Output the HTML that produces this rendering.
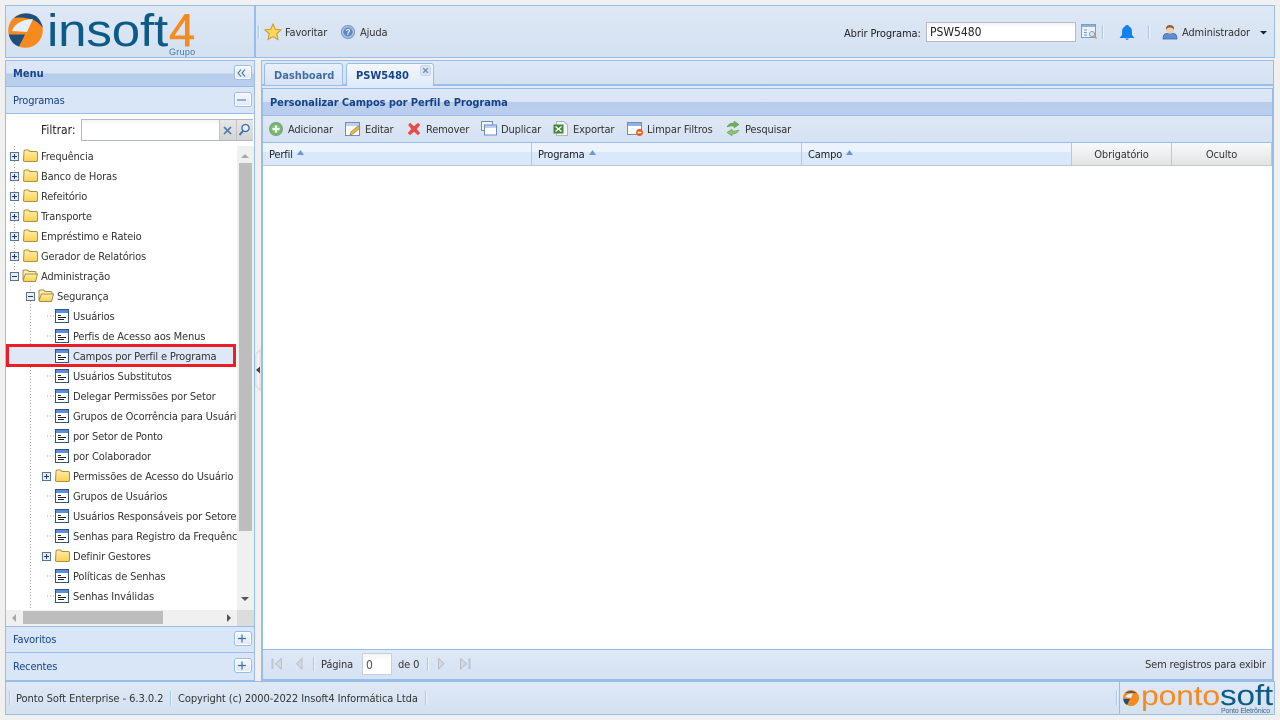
<!DOCTYPE html>
<html><head><meta charset="utf-8"><style>
*{box-sizing:border-box}
html,body{margin:0;padding:0;width:1280px;height:720px;overflow:hidden;background:#f0f0f0}
body{font-family:"DejaVu Sans Condensed","DejaVu Sans",sans-serif;font-stretch:condensed;font-size:11px;letter-spacing:-.15px;color:#333;position:relative}
.a{position:absolute}
.t{position:absolute;white-space:nowrap;line-height:14px;margin-top:1px}
.b{font-weight:bold;font-size:11px;letter-spacing:0;margin-top:0}
.hd{background:linear-gradient(#dfe8f6,#d3e1f1);border:1px solid #99bce8}
.title{background:linear-gradient(#dde8f6 0,#d9e5f5 50%,#b8cdec 50%,#b9ceec 100%);border:1px solid #99bce8}
.col{position:absolute;top:143px;height:23px;border-right:1px solid #c5c5c5;border-bottom:1px solid #c5c5c5;background:linear-gradient(#ebf3fd 0,#ebf3fd 40%,#d9e8fb 40%,#d9e8fb 100%)}
.col.g{background:linear-gradient(#f9f9f9,#e3e4e6);text-align:center;color:#333;line-height:24px}
.sep{position:absolute;width:1px;background:#a9c8ee;box-shadow:1px 0 0 #eef4fb}
.tb{position:absolute;width:18px;height:15px;border:1px solid #99bce8;border-radius:3px;background:linear-gradient(#f4f8fd,#dfe9f6);box-shadow:inset 0 0 0 1px #fff}
svg{position:absolute;overflow:visible}
#tree .t{color:#333}
</style></head><body>
<svg width="0" height="0" style="position:absolute">
<defs>
<symbol id="plus" viewBox="0 0 9 9"><rect x=".5" y=".5" width="8" height="8" fill="#e6edf7" stroke="#5b7392"/><path d="M2 4.500h5M4.500 2v5" stroke="#1f3c6a"/></symbol>
<symbol id="minus" viewBox="0 0 9 9"><rect x=".5" y=".5" width="8" height="8" fill="#e6edf7" stroke="#5b7392"/><path d="M2 4.500h5" stroke="#1f3c6a"/></symbol>
<linearGradient id="fg" x1="0" y1="0" x2="0" y2="1"><stop offset="0" stop-color="#ffeeaa"/><stop offset="1" stop-color="#fbcf52"/></linearGradient>
<symbol id="folder" viewBox="0 0 15 13"><path d="M1 2.500Q1 1 2.500 1H5.500L7 2.500H13Q14.500 2.500 14.500 4V11Q14.500 12.500 13 12.500H2Q.5 12.500 .5 11Z" fill="url(#fg)" stroke="#b0903f"/></symbol>
<symbol id="fopen" viewBox="0 0 16 13"><path d="M1 11V2.500Q1 1 2.500 1H5.500L7 2.500H12.500Q14 2.500 14 4V5" fill="#fbeeb0" stroke="#a98d3f"/><path d="M1 11.500L3.500 5H15.500L13.500 12.500H2Z" fill="url(#fg)" stroke="#a98d3f"/></symbol>
<symbol id="leaf" viewBox="0 0 14 14"><rect x=".5" y=".5" width="13" height="13" fill="#fff" stroke="#34527e"/><rect x="1" y="1" width="12" height="3" fill="#5a8ce0"/><path d="M3 6.500h3M3 8.500h8M3 10.500h6" stroke="#222"/></symbol>
</defs></svg>

<!-- logo panel -->
<div class="a hd" style="left:5px;top:5px;width:250px;height:53px"></div>
<svg style="left:0;top:0" width="255" height="58">
<circle cx="25.500" cy="30.500" r="17.300" fill="#f68a1f"/>
<path d="M14 18Q24 10 36 16Q41 20 43 28Q38 21 30 19Q21 16.500 14 18Z" fill="#1d4f7c"/>
<path d="M12 31Q16 20 33 19L27 32Z" fill="#e8eef8"/>
<path d="M8.800 34.500H25L19 46.500Q11 44 8.800 34.500Z" fill="#1d4f7c"/>
<text x="47" y="46" font-family="Liberation Sans" font-size="45" fill="#0c5a86" textLength="121" lengthAdjust="spacingAndGlyphs">insoft</text>
<text x="169" y="46" font-family="Liberation Sans" font-size="46" fill="#f68a1f" stroke="#f68a1f" stroke-width=".6" textLength="26" lengthAdjust="spacingAndGlyphs">4</text>
<text x="169" y="55" font-family="Liberation Sans" font-size="9" fill="#3f7a9e" textLength="26">Grupo</text>
</svg>

<!-- top toolbar -->
<div class="a hd" style="left:255px;top:5px;width:1020px;height:53px"></div>
<div class="sep" style="left:258px;top:25px;height:14px"></div>
<svg style="left:264px;top:23px" width="18" height="18" viewBox="0 0 18 18"><path d="M9 1L11.300 6.200 17 6.900 12.800 10.700 14 16.500 9 13.600 4 16.500 5.200 10.700 1 6.900 6.700 6.200Z" fill="#fbd75a" stroke="#c59a2a"/></svg>
<div class="t" style="left:285px;top:25px">Favoritar</div>
<svg style="left:341px;top:25px" width="14" height="14" viewBox="0 0 14 14"><circle cx="7" cy="7" r="6.500" fill="#a9c0e0" stroke="#7c97c0"/><circle cx="7" cy="7" r="4.500" fill="#5f86c4"/><text x="7" y="10" text-anchor="middle" font-size="8" font-weight="bold" fill="#fff" font-family="Liberation Sans">?</text></svg>
<div class="t" style="left:360px;top:25px">Ajuda</div>
<div class="t" style="left:844px;top:26px;color:#222;letter-spacing:-.1px">Abrir Programa:</div>
<div class="a" style="left:926px;top:22px;width:150px;height:20px;border:1px solid #b5b8c8;background:linear-gradient(#f4f4f4,#fff 25%)"></div>
<div class="t" style="left:930px;top:24px;font-size:12px;color:#222;letter-spacing:0">PSW5480</div>
<svg style="left:1081px;top:24px" width="17" height="16" viewBox="0 0 17 16"><rect x=".5" y=".5" width="14" height="13" fill="#eaf1fa" stroke="#7f9cc4"/><rect x="1" y="1" width="13" height="2" fill="#8fb0dc"/><path d="M3 6h3M3 8.500h3M3 11h3" stroke="#7f9cc4"/><circle cx="11" cy="10" r="2.500" fill="#d8e6f5" stroke="#7f9cc4"/><path d="M13 12l2.500 2.500" stroke="#d99a4a" stroke-width="1.500"/></svg>
<div class="sep" style="left:1102px;top:25px;height:14px"></div>
<svg style="left:1119px;top:24px" width="16" height="17" viewBox="0 0 16 17"><path d="M8 1Q10 1 10 2.500Q13 3.500 13 8V11L15.500 14H.5L3 11V8Q3 3.500 6 2.500Q6 1 8 1Z" fill="#1481ef"/><path d="M6 14.500Q8 17.500 10 14.500Z" fill="#1481ef"/></svg>
<div class="sep" style="left:1148px;top:25px;height:14px"></div>
<svg style="left:1162px;top:24px" width="16" height="16" viewBox="0 0 16 16"><path d="M1 15Q1 9.500 5 9.500H11Q15 9.500 15 15Z" fill="#5d8fd0" stroke="#3c68a4" stroke-width=".7"/><circle cx="8" cy="6" r="3.800" fill="#f3cfae"/><path d="M4 6Q3.500 1 8 1Q12.500 1 12 6Q11 3.500 8 3.500Q5 3.500 4 6Z" fill="#8d5a32"/></svg>
<div class="t" style="left:1182px;top:25px">Administrador</div>
<svg style="left:1260px;top:31px" width="8" height="4"><path d="M0 0H7L3.500 3.500Z" fill="#222"/></svg>

<!-- left panel -->
<div class="a" style="left:5px;top:60px;width:250px;height:621px;background:#fff;border:1px solid #99bce8"></div>
<div class="a title" style="left:5px;top:60px;width:250px;height:27px"></div>
<div class="t b" style="left:13px;top:67px;color:#15428b">Menu</div>
<div class="tb" style="left:234px;top:65px"></div>
<svg style="left:237px;top:69px" width="10" height="8"><path d="M4 .5L1 4l3 3.500M8 .5L5 4l3 3.500" stroke="#3f6ea8" fill="none"/></svg>
<div class="a" style="left:5px;top:87px;width:250px;height:27px;background:#d9e6f7;border:1px solid #99bce8;border-top:0"></div>
<div class="t" style="left:13px;top:93px;color:#15428b">Programas</div>
<div class="tb" style="left:234px;top:92px"></div>
<svg style="left:236px;top:99px" width="12" height="2"><path d="M1 1H10" stroke="#3f6ea8"/></svg>
<div class="t" style="left:41px;top:122px;font-size:12px;color:#222;letter-spacing:0">Filtrar:</div>
<div class="a" style="left:81px;top:119px;width:172px;height:22px;border:1px solid #b5b8c8;background:linear-gradient(#f4f4f4,#fff 25%)"></div>
<div class="a" style="left:219px;top:120px;width:17px;height:20px;background:linear-gradient(#e8e8e8,#d4d4d4);border-left:1px solid #c4c4c4"></div>
<div class="a" style="left:236px;top:120px;width:17px;height:20px;background:linear-gradient(#e8e8e8,#d4d4d4);border-left:1px solid #c4c4c4"></div>
<svg style="left:223px;top:126px" width="9" height="9"><path d="M1 1L8 8M8 1L1 8" stroke="#4f7cb0" stroke-width="1.600"/></svg>
<svg style="left:238px;top:123px" width="13" height="13"><circle cx="7.500" cy="5" r="3.600" fill="#eaf2fb" stroke="#3f74b4" stroke-width="1.400"/><path d="M5 8L1.500 12" stroke="#3f74b4" stroke-width="2"/></svg>

<!-- tree -->
<div id="tree" class="a" style="left:6px;top:146px;width:231px;height:464px;overflow:hidden">
<svg style="left:0;top:0" width="231" height="464">
<path d="M8.500 0V130M24.500 140V464" stroke="#aaa" stroke-dasharray="1 2" fill="none"/>
<path d="M41 170h8M41 190h8M41 210h8M41 230h8M41 250h8M41 270h8M41 290h8M41 310h8M41 350h8M41 370h8M41 390h8M41 430h8M41 450h8" stroke="#aaa" stroke-dasharray="1 2" fill="none"/>
</svg>
<div class="a" style="left:0;top:198px;width:230px;height:23px;background:#dfe8f6;border:3px solid #ee1c25"></div>
<svg style="left:0;top:0" width="231" height="464">
<use href="#plus" x="4" y="6" width="9" height="9"/><use href="#folder" x="17" y="3" width="15" height="13"/>
<use href="#plus" x="4" y="26" width="9" height="9"/><use href="#folder" x="17" y="23" width="15" height="13"/>
<use href="#plus" x="4" y="46" width="9" height="9"/><use href="#folder" x="17" y="43" width="15" height="13"/>
<use href="#plus" x="4" y="66" width="9" height="9"/><use href="#folder" x="17" y="63" width="15" height="13"/>
<use href="#plus" x="4" y="86" width="9" height="9"/><use href="#folder" x="17" y="83" width="15" height="13"/>
<use href="#plus" x="4" y="106" width="9" height="9"/><use href="#folder" x="17" y="103" width="15" height="13"/>
<use href="#minus" x="4" y="126" width="9" height="9"/><use href="#fopen" x="16" y="123" width="16" height="13"/>
<use href="#minus" x="20" y="146" width="9" height="9"/><use href="#fopen" x="32" y="143" width="16" height="13"/>
<use href="#leaf" x="49" y="163" width="14" height="14"/>
<use href="#leaf" x="49" y="183" width="14" height="14"/>
<use href="#leaf" x="49" y="203" width="14" height="14"/>
<use href="#leaf" x="49" y="223" width="14" height="14"/>
<use href="#leaf" x="49" y="243" width="14" height="14"/>
<use href="#leaf" x="49" y="263" width="14" height="14"/>
<use href="#leaf" x="49" y="283" width="14" height="14"/>
<use href="#leaf" x="49" y="303" width="14" height="14"/>
<use href="#plus" x="36" y="326" width="9" height="9"/><use href="#folder" x="49" y="323" width="15" height="13"/>
<use href="#leaf" x="49" y="343" width="14" height="14"/>
<use href="#leaf" x="49" y="363" width="14" height="14"/>
<use href="#leaf" x="49" y="383" width="14" height="14"/>
<use href="#plus" x="36" y="406" width="9" height="9"/><use href="#folder" x="49" y="403" width="15" height="13"/>
<use href="#leaf" x="49" y="423" width="14" height="14"/>
<use href="#leaf" x="49" y="443" width="14" height="14"/>
</svg>
<div class="t" style="left:35px;top:3px">Frequência</div>
<div class="t" style="left:35px;top:23px">Banco de Horas</div>
<div class="t" style="left:35px;top:43px">Refeitório</div>
<div class="t" style="left:35px;top:63px">Transporte</div>
<div class="t" style="left:35px;top:83px">Empréstimo e Rateio</div>
<div class="t" style="left:35px;top:103px">Gerador de Relatórios</div>
<div class="t" style="left:35px;top:123px">Administração</div>
<div class="t" style="left:51px;top:143px">Segurança</div>
<div class="t" style="left:67px;top:163px">Usuários</div>
<div class="t" style="left:67px;top:183px">Perfis de Acesso aos Menus</div>
<div class="t" style="left:67px;top:203px">Campos por Perfil e Programa</div>
<div class="t" style="left:67px;top:223px">Usuários Substitutos</div>
<div class="t" style="left:67px;top:243px">Delegar Permissões por Setor</div>
<div class="t" style="left:67px;top:263px">Grupos de Ocorrência para Usuários</div>
<div class="t" style="left:67px;top:283px">por Setor de Ponto</div>
<div class="t" style="left:67px;top:303px">por Colaborador</div>
<div class="t" style="left:67px;top:323px">Permissões de Acesso do Usuário</div>
<div class="t" style="left:67px;top:343px">Grupos de Usuários</div>
<div class="t" style="left:67px;top:363px">Usuários Responsáveis por Setores</div>
<div class="t" style="left:67px;top:383px">Senhas para Registro da Frequência</div>
<div class="t" style="left:67px;top:403px">Definir Gestores</div>
<div class="t" style="left:67px;top:423px">Políticas de Senhas</div>
<div class="t" style="left:67px;top:443px">Senhas Inválidas</div>
</div>
<!-- v scroll -->
<div class="a" style="left:237px;top:146px;width:17px;height:464px;background:#f0f0f0"></div>
<div class="a" style="left:239px;top:163px;width:13px;height:368px;background:#bdbdbd"></div>
<svg style="left:241px;top:153px" width="9" height="5"><path d="M0 5L4 1 8 5Z" fill="#a8a8a8"/></svg>
<svg style="left:241px;top:597px" width="9" height="5"><path d="M0 0L4 4 8 0Z" fill="#555"/></svg>
<!-- h scroll -->
<div class="a" style="left:6px;top:610px;width:231px;height:16px;background:#f0f0f0"></div>
<div class="a" style="left:237px;top:610px;width:17px;height:16px;background:#dcdcdc"></div>
<div class="a" style="left:23px;top:611px;width:140px;height:13px;background:#bdbdbd"></div>
<svg style="left:12px;top:614px" width="5" height="9"><path d="M4 0L0 4 4 8Z" fill="#a8a8a8"/></svg>
<svg style="left:227px;top:614px" width="5" height="9"><path d="M0 0L4 4 0 8Z" fill="#555"/></svg>
<div class="a" style="left:5px;top:626px;width:250px;height:27px;background:#d9e6f7;border:1px solid #99bce8"></div>
<div class="t" style="left:13px;top:632px;color:#15428b">Favoritos</div>
<div class="tb" style="left:234px;top:631px"></div>
<svg style="left:237px;top:634px" width="10" height="10"><path d="M1 4.500H9M5 .5V8.500" stroke="#3f6ea8" stroke-width="1.200"/></svg>
<div class="a" style="left:5px;top:652px;width:250px;height:29px;background:#d9e6f7;border:1px solid #99bce8"></div>
<div class="t" style="left:13px;top:659px;color:#15428b">Recentes</div>
<div class="tb" style="left:234px;top:658px"></div>
<svg style="left:237px;top:661px" width="10" height="10"><path d="M1 4.500H9M5 .5V8.500" stroke="#3f6ea8" stroke-width="1.200"/></svg>

<!-- splitter -->
<svg style="left:255px;top:350px" width="6" height="40"><path d="M1 4L5 0V40L1 36Z" fill="#f4f4f4" stroke="#d8d8d8"/><path d="M1 20L5 16.500V23.500Z" fill="#444"/></svg>

<!-- right panel -->
<div class="a" style="left:261px;top:60px;width:1013px;height:622px;background:#99bce8"></div>
<div class="a" style="left:262px;top:61px;width:1011px;height:24px;background:linear-gradient(#dde8f6,#d3e1f2);border-bottom:1px solid #99bce8"></div>
<div class="a" style="left:264px;top:63px;width:79px;height:22px;border:1px solid #99bce8;border-bottom:0;border-radius:3px 3px 0 0;background:linear-gradient(#e8f0fb,#d6e4f6)"></div>
<div class="t b" style="left:274px;top:69px;color:#416da3">Dashboard</div>
<div class="a" style="left:346px;top:63px;width:88px;height:23px;border:1px solid #99bce8;border-bottom:0;border-radius:3px 3px 0 0;background:linear-gradient(#f4f8fe,#dfeafa)"></div>
<div class="t b" style="left:356px;top:69px;color:#15428b">PSW5480</div>
<svg style="left:420px;top:65px" width="11" height="11"><rect x=".5" y=".5" width="10" height="10" rx="2" fill="#dbe6f5" stroke="#c4d4ea"/><path d="M3.200 3.200L7.800 7.800M7.800 3.200L3.200 7.800" stroke="#7f93b0" stroke-width="1.500"/></svg>
<div class="a" style="left:262px;top:86px;width:1011px;height:2px;background:#dfe9f7"></div>
<div class="a title" style="left:262px;top:88px;width:1011px;height:28px"></div>
<div class="t b" style="left:270px;top:96px;color:#15428b;letter-spacing:-.07px">Personalizar Campos por Perfil e Programa</div>
<div class="a" style="left:262px;top:115px;width:1011px;height:28px;background:linear-gradient(#dfe8f6,#d5e2f2);border:1px solid #99bce8"></div>
<svg style="left:269px;top:122px" width="14" height="14" viewBox="0 0 14 14"><circle cx="7" cy="7" r="6.500" fill="#71b96b" stroke="#8a9f85"/><circle cx="7" cy="7" r="4" fill="#8ecb7c"/><path d="M3.500 7H10.500M7 3.500V10.500" stroke="#fff" stroke-width="2"/></svg>
<div class="t" style="left:288px;top:122px">Adicionar</div>
<svg style="left:345px;top:121px" width="16" height="16" viewBox="0 0 16 16"><rect x=".5" y="1.500" width="14" height="13" fill="#fff" stroke="#6f8fbb"/><rect x="1" y="2" width="13" height="3" fill="#bcd2ee"/><path d="M5 14L6 11 13 5 15 7 8 13Z" fill="#f0b94e" stroke="#b07f2a" stroke-width=".7"/></svg>
<div class="t" style="left:365px;top:122px">Editar</div>
<svg style="left:407px;top:122px" width="14" height="14" viewBox="0 0 14 14"><path d="M1.500 3L3 1 7 4.500 11 1 13 3 9.500 7 13 11 11 13 7 9.500 3 13 1 11 4.500 7Z" fill="#ec4a45" stroke="#d9534f" stroke-width=".5"/></svg>
<div class="t" style="left:426px;top:122px">Remover</div>
<svg style="left:481px;top:121px" width="16" height="15" viewBox="0 0 16 15"><rect x=".5" y=".5" width="11" height="9" fill="#eef4fc" stroke="#6f8fbb"/><rect x="3.500" y="4" width="12" height="10" fill="#fff" stroke="#6f8fbb"/><rect x="4" y="4.500" width="11" height="2.500" fill="#bcd2ee"/></svg>
<div class="t" style="left:501px;top:122px">Duplicar</div>
<svg style="left:553px;top:121px" width="15" height="15" viewBox="0 0 15 15"><path d="M3.500 .5H11L14.500 4V14.500H3.500Z" fill="#f4f4f4" stroke="#b5b5b5"/><rect x=".5" y="3.500" width="10" height="9" fill="#3f8a3b"/><path d="M2.500 5.500L8.500 10.500M8.500 5.500L2.500 10.500" stroke="#fff" stroke-width="1.300"/></svg>
<div class="t" style="left:573px;top:122px">Exportar</div>
<svg style="left:627px;top:121px" width="17" height="16" viewBox="0 0 17 16"><rect x=".5" y="1.500" width="14" height="12" fill="#fff" stroke="#6f8fbb"/><rect x="1" y="2" width="13" height="3" fill="#8fb3e2"/><circle cx="12.500" cy="11.500" r="3.500" fill="#ea5b14"/><path d="M10.500 11.500H14.500" stroke="#fff" stroke-width="1.500"/></svg>
<div class="t" style="left:647px;top:122px;letter-spacing:-.08px">Limpar Filtros</div>
<svg style="left:725px;top:121px" width="16" height="15" viewBox="0 0 16 15"><path d="M2 6Q4 1.500 9 2V0L14 3.500 9 7V5Q6 4.500 2 6Z" fill="#6fae55" stroke="#5a9646" stroke-width=".5"/><path d="M14 9Q12 13.500 7 13V15L2 11.500 7 8V10Q10 10.500 14 9Z" fill="#8cc46f" stroke="#5a9646" stroke-width=".5"/></svg>
<div class="t" style="left:745px;top:122px">Pesquisar</div>

<!-- grid -->
<div class="a" style="left:263px;top:143px;width:1009px;height:507px;background:#fff"></div>
<div class="col" style="left:263px;width:269px"></div>
<div class="col" style="left:532px;width:270px"></div>
<div class="col" style="left:802px;width:270px"></div>
<div class="col g" style="left:1072px;width:100px">Obrigatório</div>
<div class="col g" style="left:1172px;width:100px">Oculto</div>
<div class="t" style="left:269px;top:147px;color:#222">Perfil</div>
<svg style="left:297px;top:150px" width="8" height="5"><path d="M0 5L3.500 0 7 5Z" fill="#6d97cf"/></svg>
<div class="t" style="left:538px;top:147px;color:#222">Programa</div>
<svg style="left:589px;top:150px" width="8" height="5"><path d="M0 5L3.500 0 7 5Z" fill="#6d97cf"/></svg>
<div class="t" style="left:808px;top:147px;color:#222">Campo</div>
<svg style="left:846px;top:150px" width="8" height="5"><path d="M0 5L3.500 0 7 5Z" fill="#6d97cf"/></svg>

<!-- paging -->
<div class="a" style="left:263px;top:649px;width:1009px;height:30px;background:linear-gradient(#dfe8f6,#d5e2f2);border-top:1px solid #99bce8"></div>
<svg style="left:271px;top:658px" width="12" height="12"><path d="M1.500 .5V11" stroke="#bcc4cf" stroke-width="2"/><path d="M10.500 .5L4.500 5.700 10.500 11Z" fill="#d3d9e2" stroke="#b9c0cc"/></svg>
<svg style="left:296px;top:658px" width="7" height="12"><path d="M6 .5L.5 5.700 6 11Z" fill="#d3d9e2" stroke="#b9c0cc"/></svg>
<div class="sep" style="left:313px;top:657px;height:14px"></div>
<div class="t" style="left:321px;top:657px">Página</div>
<div class="a" style="left:362px;top:653px;width:30px;height:22px;border:1px solid #c5cfdd;background:linear-gradient(#f4f4f4,#fff 30%)"></div>
<div class="t" style="left:366px;top:657px;font-size:12px;color:#555;letter-spacing:0">0</div>
<div class="t" style="left:398px;top:657px">de 0</div>
<div class="sep" style="left:427px;top:657px;height:14px"></div>
<svg style="left:438px;top:658px" width="7" height="12"><path d="M.5 .5L6 5.700 .5 11Z" fill="#d3d9e2" stroke="#b9c0cc"/></svg>
<svg style="left:460px;top:658px" width="12" height="12"><path d="M.5 .5L6.500 5.700 .5 11Z" fill="#d3d9e2" stroke="#b9c0cc"/><path d="M9.500 .5V11" stroke="#bcc4cf" stroke-width="2"/></svg>
<div class="t" style="left:1145px;top:657px">Sem registros para exibir</div>

<!-- footer -->
<div class="a hd" style="left:5px;top:681px;width:1270px;height:34px"></div>
<div class="sep" style="left:9px;top:691px;height:14px"></div>
<div class="t" style="left:16px;top:691px;letter-spacing:-.05px">Ponto Soft Enterprise - 6.3.0.2</div>
<div class="sep" style="left:170px;top:691px;height:14px"></div>
<div class="t" style="left:178px;top:691px;letter-spacing:-.07px">Copyright (c) 2000-2022 Insoft4 Informática Ltda</div>
<div class="sep" style="left:425px;top:691px;height:14px"></div>
<div class="sep" style="left:1116px;top:691px;height:14px"></div>
<div class="a" style="left:1119px;top:682px;width:1px;height:32px;background:#99bce8"></div>
<svg style="left:1120px;top:682px" width="155" height="33">
<circle cx="11" cy="16" r="8" fill="#f68a1f"/>
<path d="M5 11Q11 7 17 11.500Q11 10 5 11Z" fill="#1d4f7c"/>
<path d="M3.200 17H10L7 23Q4 21.500 3.200 17Z" fill="#1d4f7c"/>
<path d="M5 15Q7 11.500 13 11.500L11 16Z" fill="#e8eef8"/>
<text x="21" y="23" font-family="Liberation Sans" font-size="28" fill="#f68a1f" textLength="79" lengthAdjust="spacingAndGlyphs">ponto</text>
<text x="100" y="23" font-family="Liberation Sans" font-size="29" fill="#0c5a86" textLength="53" lengthAdjust="spacingAndGlyphs">soft</text>
<text x="101" y="31" font-family="Liberation Sans" font-size="7" fill="#456a85" textLength="49">Ponto Eletrônico</text>
</svg>
</body></html>
